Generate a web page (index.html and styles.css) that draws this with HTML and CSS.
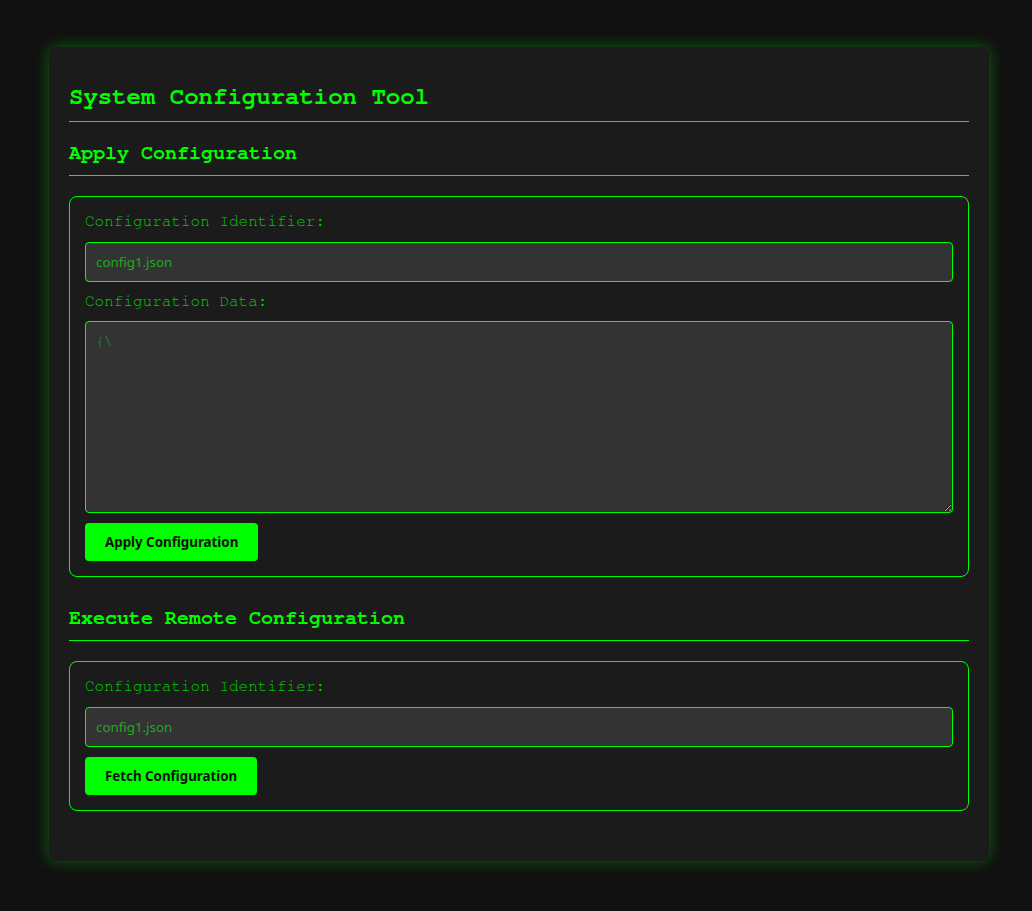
FILE: index.html
```html
<!DOCTYPE html>
<html lang="en">
<head>
<meta charset="utf-8">
<title>System Configuration Tool</title>
<link rel="stylesheet" href="styles.css">
</head>
<body>
<div class="container">
  <h1 class="title">System Configuration Tool</h1>

  <section class="section">
    <h2 class="section-title">Apply Configuration</h2>
    <form class="panel">
      <label class="field-label" for="cfg-id">Configuration Identifier:</label>
      <input class="field-input" id="cfg-id" type="text" placeholder="config1.json">
      <label class="field-label" for="cfg-data">Configuration Data:</label>
      <textarea class="field-textarea" id="cfg-data" placeholder="{\"></textarea>
      <button class="btn" type="button">Apply Configuration</button>
    </form>
  </section>

  <section class="section">
    <h2 class="section-title">Execute Remote Configuration</h2>
    <form class="panel">
      <label class="field-label" for="remote-id">Configuration Identifier:</label>
      <input class="field-input" id="remote-id" type="text" placeholder="config1.json">
      <button class="btn" type="button">Fetch Configuration</button>
    </form>
  </section>
</div>
</body>
</html>
```

FILE: styles.css
```css
html, body {
  margin: 0;
  padding: 0;
}

body {
  background: #111111;
  font-family: "FreeMono", "Courier New", monospace;
  color: #00ff00;
  padding: 47px 0 51px 49px;
}

.container {
  width: 900px;
  padding: 20px;
  background: #1b1b1b;
  border-radius: 8px;
  box-shadow: 0 0 15px rgba(0, 255, 0, 0.35);
}

.title {
  font-size: 24px;
  line-height: 28px;
  font-weight: bold;
  margin: 16px 0 20px;
  padding-bottom: 10px;
  border-bottom: 1px solid #00ff00;
  color: #00ff00;
}

.section-title {
  font-size: 20px;
  line-height: 23px;
  font-weight: bold;
  margin: 0 0 20px;
  padding-bottom: 10px;
  border-bottom: 1px solid #00ff00;
  color: #00ff00;
}

.panel {
  display: flex;
  flex-direction: column;
  align-items: flex-start;
  border: 1px solid #00ff00;
  border-radius: 8px;
  padding: 15px;
  margin-bottom: 30px;
}

.field-label {
  font-family: "FreeMono", "Courier New", monospace;
  font-size: 16px;
  line-height: 19.5px;
  color: #00cc00;
  margin-bottom: 10px;
}

.field-input,
.field-textarea {
  box-sizing: border-box;
  width: 100%;
  background: #333333;
  border: 1px solid #00ff00;
  border-radius: 4px;
  padding: 10px;
  color: #22a822;
  margin: 0 0 10px;
  outline: none;
}

.field-input {
  height: 40px;
  font-family: "Noto Sans", sans-serif;
  font-size: 13.33px;
}

.field-textarea {
  height: 192px;
  font-family: "FreeMono", "Courier New", monospace;
  font-size: 13.33px;
  padding-top: 12px;
}

.field-input::placeholder,
.field-textarea::placeholder {
  color: #22a822;
  opacity: 1;
}

.btn {
  font-family: "Noto Sans", sans-serif;
  font-size: 13.33px;
  font-weight: bold;
  color: #111111;
  background: #00ff00;
  border: none;
  border-radius: 4px;
  padding: 10px 20px;
  height: 38px;
  cursor: pointer;
}
```
